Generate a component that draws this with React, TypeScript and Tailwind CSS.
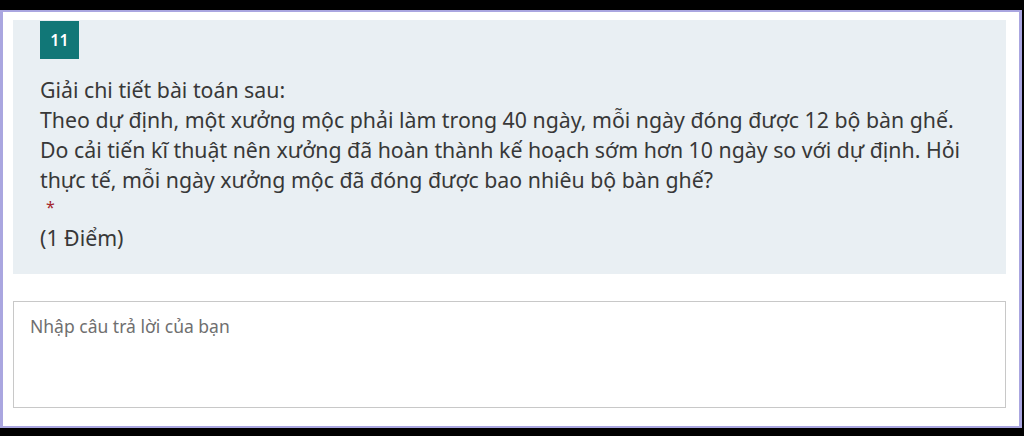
export default function App() {
  return (
    <div className="h-[436px] w-[1024px] bg-black pt-[10px] font-['Noto_Sans',sans-serif]">
      <div className="flex h-[418px] w-[1022px] flex-col border-x-[3px] border-y-[2px] border-[#aaa6e0] bg-white pt-[8px] pl-[10px] pr-[13px]">
        <div className="h-[254px] w-[993px] bg-[#e9eff3] pl-[27px] pt-[1px]">
          <div className="flex h-[38px] w-[39px] items-center justify-center bg-[#117777] text-[16px] font-semibold text-white">
            11
          </div>
          <div className="mt-[16px] text-[21.3px] leading-[30px] text-[#383838]">
            <p>Giải chi tiết bài toán sau:</p>
            <p>Theo dự định, một xưởng mộc phải làm trong 40 ngày, mỗi ngày đóng được 12 bộ bàn ghế.</p>
            <p>Do cải tiến kĩ thuật nên xưởng đã hoàn thành kế hoạch sớm hơn 10 ngày so với dự định. Hỏi</p>
            <p>thực tế, mỗi ngày xưởng mộc đã đóng được bao nhiêu bộ bàn ghế?</p>
            <p className="pl-[6px] text-[16px] leading-[24px] text-[#a4262c]">*</p>
            <p className="mt-[4px]">(1 Điểm)</p>
          </div>
        </div>
        <div className="mt-[27px] h-[107px] w-[993px] border border-[#c8c8c8] px-[16px] pt-[11px] text-[17.5px] text-[#6f6f6f]">
          Nhập câu trả lời của bạn
        </div>
      </div>
    </div>
  );
}
